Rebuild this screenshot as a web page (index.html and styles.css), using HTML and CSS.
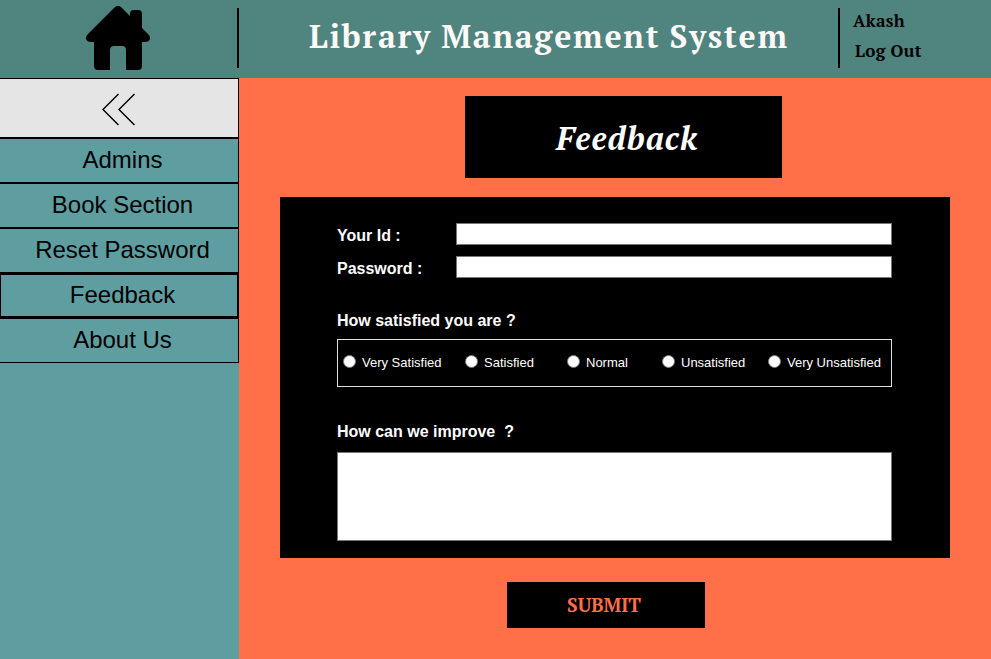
FILE: index.html
```html
<!DOCTYPE html>
<html lang="en">
<head>
<meta charset="utf-8">
<title>Library Management System</title>
<link rel="stylesheet" href="styles.css">
</head>
<body>
<header class="header">
  <a class="home" aria-label="Home">
    <svg width="64" height="65" viewBox="0 0 64 65"><path d="M28.5 1.5Q32 -1.4 35.5 1.5L44 10V8Q44 4 48 4H52Q56 4 56 8V22L62.5 28.5Q65 31.5 63.5 34Q62.500 36 59 36H56V60Q56 64 52 64H40V44Q40 40 36 40H28Q24 40 24 44V64H12Q8 64 8 60V36H5Q1.500 36 .5 34Q-1 31.500 1.500 28.500Z"/></svg>
  </a>
  <h1 class="title">Library Management System</h1>
  <div class="account"><a class="user">Akash</a><a class="logout">Log Out</a></div>
</header>
<div class="body">
  <nav class="sidebar">
    <button class="toggle" aria-label="Collapse"><svg width="34" height="33" viewBox="0 0 34 33"><path d="M16.500 1L1 16.500L16.500 32M32.500 1L17 16.500L32.500 32"/></svg></button>
    <a class="item">Admins</a>
    <a class="item">Book Section</a>
    <a class="item">Reset Password</a>
    <a class="item active">Feedback</a>
    <a class="item">About Us</a>
  </nav>
  <main class="main">
    <h2 class="heading">Feedback</h2>
    <form class="form">
      <div class="row"><label for="uid">Your Id :</label><input class="field" id="uid" type="text"></div>
      <div class="row"><label for="pwd">Password :</label><input class="field" id="pwd" type="password"></div>
      <h3 class="question">How satisfied you are ?</h3>
      <div class="options">
        <label class="option"><input type="radio" name="rate"><span>Very Satisfied</span></label>
        <label class="option"><input type="radio" name="rate"><span>Satisfied</span></label>
        <label class="option"><input type="radio" name="rate"><span>Normal</span></label>
        <label class="option"><input type="radio" name="rate"><span>Unsatisfied</span></label>
        <label class="option"><input type="radio" name="rate"><span>Very Unsatisfied</span></label>
      </div>
      <h3 class="question improve">How can we improve&nbsp; ?</h3>
      <textarea class="comment"></textarea>
    </form>
    <button class="submit">SUBMIT</button>
  </main>
</div>
</body>
</html>
```
FILE: styles.css
```css
* { box-sizing: border-box; }
body { margin: 0; font-family: "Liberation Sans", Arial, sans-serif; color: #000; }
h1, h2, h3 { margin: 0; }
.header { height: 78px; background: #4f847f; display: grid; grid-template-columns: 237px 603px 1fr; padding-top: 8px; font-family: "PT Serif", "Liberation Serif", serif; }
.home { display: block; margin: -2px 0 0 86px; }
.home svg { display: block; }
.title { height: 60px; border-left: 2px solid #000; border-right: 2px solid #000; color: #fffafa; font-size: 32px; line-height: 57px; letter-spacing: 1.75px; word-spacing: -1px; padding-left: 70px; white-space: nowrap; }
.account { display: flex; flex-direction: column; font-size: 17px; font-weight: bold; line-height: 30px; letter-spacing: .35px; padding-left: 13px; margin-top: -2px; }
.logout { padding-left: 2px; }
.body { display: grid; grid-template-columns: 239px 1fr; height: 581px; }
.sidebar { background: #5f9ea0; }
.toggle { display: flex; align-items: center; justify-content: center; width: 239px; height: 60px; padding: 2px 0 0; background: #e5e5e5; border: 1px solid #000; border-left: 0; border-radius: 0; }
.toggle svg { fill: none; stroke: #000; stroke-width: 1.4; }
.item { display: block; height: 45px; line-height: 41px; border: 1px solid #000; border-left: 0; text-align: center; font-size: 24px; padding-left: 7px; }
.active { border-width: 2px; border-left: 1px solid #000; line-height: 39px; }
.main { background: #ff7048; padding-top: 18px; }
.heading { width: 317px; height: 82px; margin-left: 226px; padding-left: 91px; background: #000; color: #fff; font: italic bold 32px/84px "PT Serif", "Liberation Serif", serif; letter-spacing: 1px; }
.form { width: 670px; height: 361px; margin: 19px 0 0 41px; padding: 26px 58px 0 57px; background: #000; color: #fff; }
.row { display: grid; grid-template-columns: 119px 1fr; height: 22px; margin-bottom: 11px; font-size: 16px; font-weight: bold; line-height: 25px; }
.field, .comment { display: block; width: 100%; height: 22px; margin: 0; padding: 0; border: 1px solid #767676; border-radius: 0; background: #fff; }
.question { font-size: 16px; line-height: 20px; margin-top: 33px; }
.options { display: grid; grid-template-columns: 122px 102px 95px 106px 1fr; height: 48px; margin-top: 8px; padding-left: 5px; border: 1px solid #dfdfdf; }
.option { display: flex; align-items: center; gap: 6px; height: 45px; font-size: 13px; white-space: nowrap; }
.option input { appearance: none; width: 13px; height: 13px; margin: -3px 0 0; border: 1px solid #767676; border-radius: 50%; background: #fff; }
.improve { margin-top: 35px; }
.comment { height: 89px; margin-top: 10px; resize: none; }
.submit { display: block; width: 198px; height: 46px; margin: 24px 0 0 268px; padding: 0 4px 2px 0; border: 0; background: #000; color: #ff7048; font: bold 19px "PT Serif", "Liberation Serif", serif; }
```
